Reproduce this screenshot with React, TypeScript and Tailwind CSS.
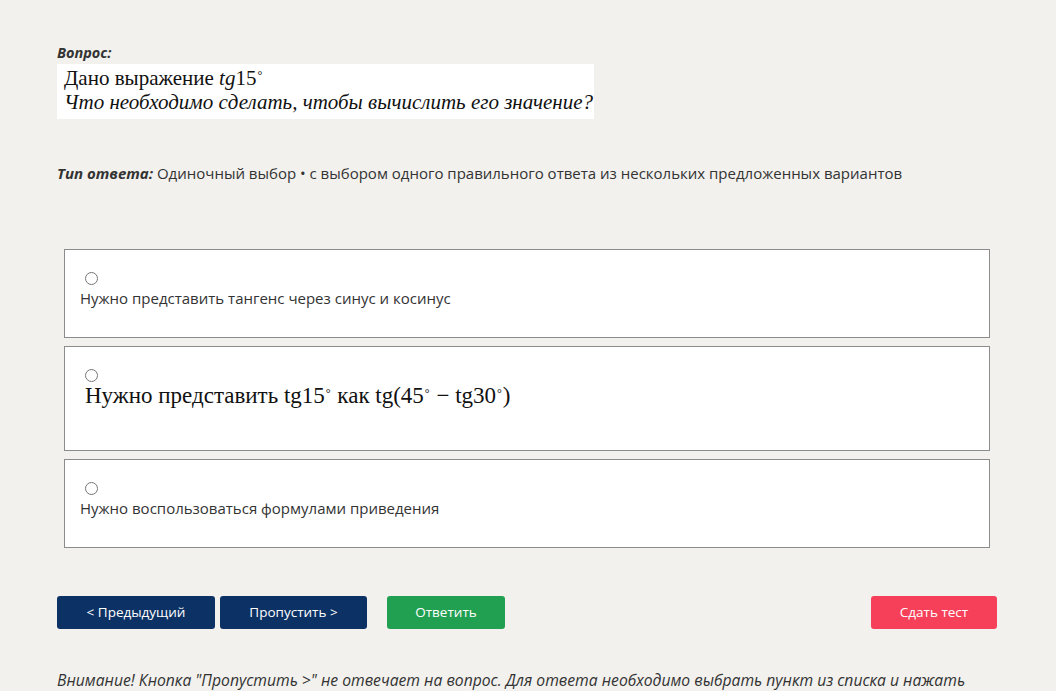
import React from 'react'

const sans = { fontFamily: '"Open Sans", "Noto Sans", sans-serif' }
const serif = { fontFamily: '"Liberation Serif", "DejaVu Serif", serif' }

function Deg() {
    return <sup className="text-[12px] relative -top-[6px] ml-[1px] mr-[1px]">°</sup>
}

export default function App() {
    return (
        <div className="min-h-[691px] w-[1056px] bg-[#f2f1ee] text-[#333] overflow-hidden" style={sans}>
            <div className="pl-[57px] pr-[59px] pt-[43px]">
                {/* Question */}
                <p className="text-[14.5px] font-bold italic text-[#333] leading-[20px]">Вопрос:</p>
                <div className="mt-[1px] w-[537px] h-[55px] bg-white pl-[7px] pt-[2px] text-[#111] text-[21px] leading-[25px]" style={serif}>
                    <div>
                        Дано выражение <span className="italic">tg</span>15<Deg />
                    </div>
                    <div className="italic -mt-[1px] whitespace-nowrap">Что необходимо сделать, чтобы вычислить его значение?</div>
                </div>

                {/* Answer type */}
                <p className="mt-[44px] text-[15px] leading-[20px] text-[#333]">
                    <span className="font-bold italic">Тип ответа:</span> Одиночный выбор • с выбором одного правильного ответа из нескольких предложенных вариантов
                </p>

                {/* Options */}
                <div className="mt-[66px] ml-[7px] mr-[7px] flex flex-col gap-[8px]">
                    <label className="h-[89px] bg-white border border-[#8c8c8c] pl-[15px] pt-[22px] block">
                        <input type="radio" name="ans" className="ml-[5px] w-[13px] h-[13px] m-0 block accent-gray-500" />
                        <div className="mt-[3px] text-[15px] leading-[20px] text-[#333]">Нужно представить тангенс через синус и косинус</div>
                    </label>
                    <label className="h-[105px] bg-white border border-[#8c8c8c] pl-[15px] pt-[22px] block">
                        <input type="radio" name="ans" className="ml-[5px] w-[13px] h-[13px] m-0 block accent-gray-500" />
                        <div className="mt-[0px] pl-[5px] text-[23px] leading-[28px] text-[#111] whitespace-nowrap" style={serif}>
                            Нужно представить tg15<Deg /> как tg(45<Deg /> − tg30<Deg />)
                        </div>
                    </label>
                    <label className="h-[89px] bg-white border border-[#8c8c8c] pl-[15px] pt-[22px] block">
                        <input type="radio" name="ans" className="ml-[5px] w-[13px] h-[13px] m-0 block accent-gray-500" />
                        <div className="mt-[3px] text-[15px] leading-[20px] text-[#333]">Нужно воспользоваться формулами приведения</div>
                    </label>
                </div>

                {/* Buttons */}
                <div className="mt-[48px] flex items-center">
                    <button className="w-[158px] h-[33px] rounded-[3px] bg-[#0c3265] text-white text-[13.5px]">&lt; Предыдущий</button>
                    <button className="ml-[5px] w-[147px] h-[33px] rounded-[3px] bg-[#0c3265] text-white text-[13.5px]">Пропустить &gt;</button>
                    <button className="ml-[20px] w-[118px] h-[33px] rounded-[3px] bg-[#22a052] text-white text-[13.5px]">Ответить</button>
                    <button className="ml-auto w-[126px] h-[33px] rounded-[3px] bg-[#f6405a] text-white text-[13.5px]">Сдать тест</button>
                </div>

                {/* Note */}
                <p className="mt-[41px] text-[15.7px] italic leading-[20px] text-[#333] whitespace-nowrap">
                    Внимание! Кнопка "Пропустить &gt;" не отвечает на вопрос. Для ответа необходимо выбрать пункт из списка и нажать
                </p>
            </div>
        </div>
    )
}
